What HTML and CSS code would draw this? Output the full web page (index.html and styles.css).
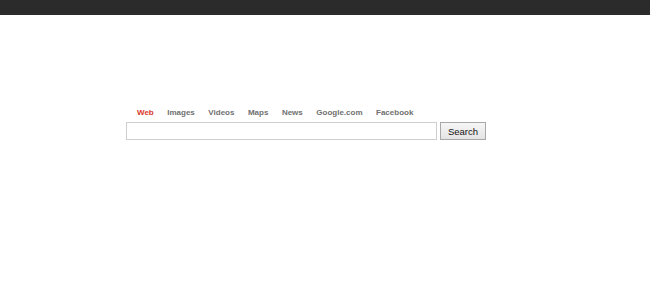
FILE: index.html
```html
<!DOCTYPE html>
<html>
<head>
<meta charset="utf-8">
<link rel="stylesheet" href="styles.css">
</head>
<body>
<div class="topbar"></div>
<div class="search-area">
  <nav class="tabs">
    <a class="tab active">Web</a>
    <a class="tab">Images</a>
    <a class="tab">Videos</a>
    <a class="tab">Maps</a>
    <a class="tab">News</a>
    <a class="tab">Google.com</a>
    <a class="tab">Facebook</a>
  </nav>
  <form class="search-row">
    <input class="search-input" type="text">
    <button class="search-btn" type="button">Search</button>
  </form>
</div>
</body>
</html>
```
FILE: styles.css
```css
html, body {
  margin: 0;
  padding: 0;
  background: #fff;
  font-family: "Liberation Sans", Arial, sans-serif;
}
.topbar {
  height: 15px;
  background: #2b2b2b;
}
.search-area {
  margin: 93px 0 0 126px;
  width: 362px;
}
.tabs {
  display: flex;
  gap: 13.5px;
  padding-left: 11px;
  height: 10px;
  line-height: 10px;
}
.tab {
  font-size: 8px;
  font-weight: bold;
  color: #707070;
  text-decoration: none;
}
.tab.active {
  color: #d9392b;
}
.search-row {
  display: flex;
  gap: 3px;
  margin: 4px 0 0 0;
}
.search-input {
  box-sizing: border-box;
  width: 311px;
  height: 18px;
  margin: 0;
  padding: 0 3px;
  border: 1px solid #cfcfcf;
  background: #fff;
  outline: none;
}
.search-btn {
  box-sizing: border-box;
  width: 46px;
  height: 18px;
  margin: 0;
  padding: 0;
  border: 1px solid #a8a8a8;
  background: linear-gradient(#f6f6f6, #e4e4e4);
  font-family: "Liberation Sans", Arial, sans-serif;
  font-size: 9.5px;
  color: #111;
}
```
